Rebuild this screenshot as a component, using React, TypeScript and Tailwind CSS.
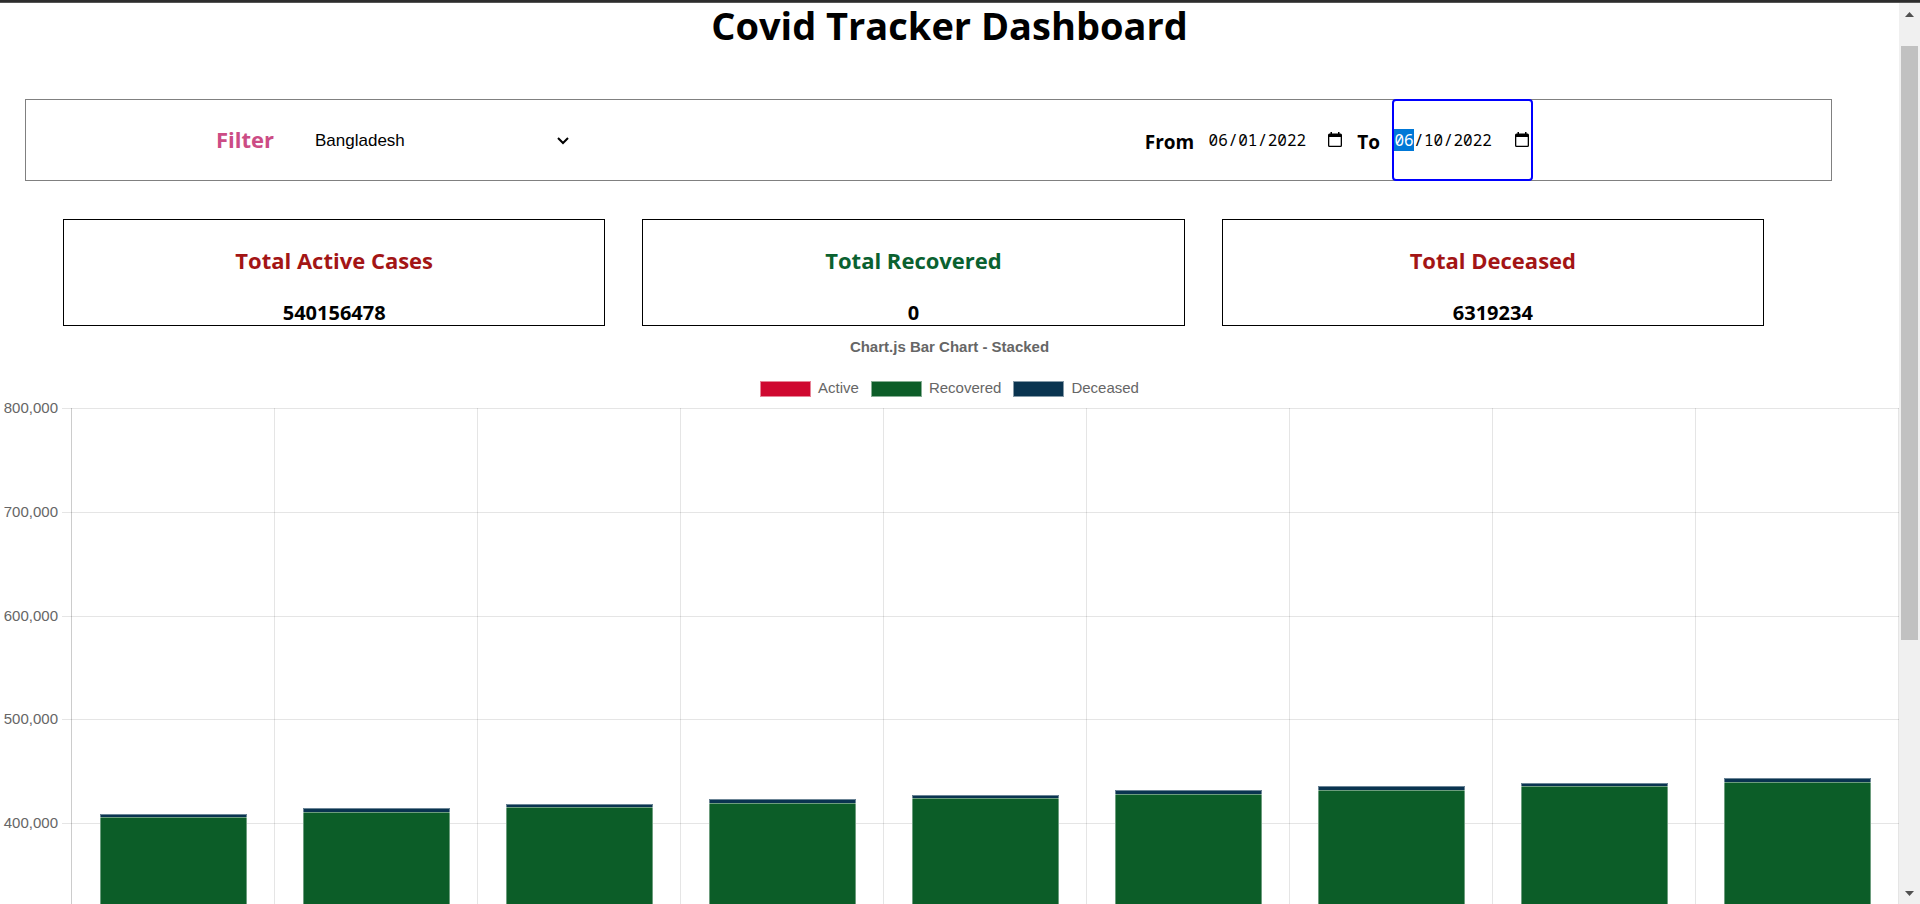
import React from "react";

const plot = { left: 71, top: 400 };
const ticks = [
  { label: "800,000", y: 408 },
  { label: "700,000", y: 512 },
  { label: "600,000", y: 616 },
  { label: "500,000", y: 719 },
  { label: "400,000", y: 823 },
];
const bars = [
  { top: 814, rec: 817 },
  { top: 808, rec: 812 },
  { top: 804, rec: 807 },
  { top: 799, rec: 803 },
  { top: 795, rec: 798 },
  { top: 790, rec: 794 },
  { top: 786, rec: 790 },
  { top: 783, rec: 786 },
  { top: 778, rec: 782 },
];
const col = 203;

function Chart() {
  return (
    <svg viewBox="0 0 1899 504" className="block w-full" role="img" aria-label="Stacked bar chart">
      {ticks.map((t) => (
        <g key={t.label}>
          <rect x={62} y={t.y - plot.top} width={1837} height={1} fill="#000" fillOpacity={0.1} />
          <text
            x={58}
            y={t.y - plot.top + 5}
            textAnchor="end"
            fill="#666"
            fontSize={15}
            fontFamily="Liberation Sans, Arial, sans-serif"
          >
            {t.label}
          </text>
        </g>
      ))}
      {Array.from({ length: 10 }, (_, i) => (
        <rect key={i} x={plot.left + i * col} y={8} width={1} height={496} fill="#000" fillOpacity={i === 0 ? 0.2 : 0.1} />
      ))}
      {bars.map((b, i) => {
        const x = 100 + i * col;
        return (
          <g key={i}>
            <rect x={x} y={b.top - plot.top} width={147} height={504} fill="#0a3450" />
            <rect x={x} y={b.rec - plot.top} width={147} height={504} fill="#0c5d28" />
            <path
              d={`M${x + 0.5} 504V${b.top - plot.top + 0.5}h146V504M${x} ${b.rec - plot.top + 0.5}h147`}
              fill="none"
              stroke="#fff"
              strokeOpacity={0.4}
            />
          </g>
        );
      })}
    </svg>
  );
}

function Card({ title, value, tone }: { title: string; value: string; tone: string }) {
  return (
    <section className="flex h-[107px] flex-1 flex-col items-center border border-black pt-6">
      <h2 className={`text-[22px] leading-8 font-bold ${tone}`}>{title}</h2>
      <p className="mt-6 text-[20px] leading-[26px] font-bold">{value}</p>
    </section>
  );
}

function Key({ label, fill }: { label: string; fill: string }) {
  return (
    <li className="flex items-center gap-[7px]">
      <span className={`h-4 w-[51px] border border-white/50 ${fill}`} />
      <span className="pb-0.5 leading-4">{label}</span>
    </li>
  );
}

function CalendarIcon() {
  return (
    <svg viewBox="0 0 16 16" className="size-4" aria-hidden="true">
      <path
        d="M2.500 1.500H3.500V0H5v1.500h6V0h1.500v1.500h1q1.500 0 1.500 1.500v10.500q0 1.500-1.500 1.500h-11Q1 15 1 13.500V3q0-1.500 1.500-1.500zM2.300 5v8.200q0 .5.5.5h10.400q.5 0 .5-.5V5z"
        fillRule="evenodd"
      />
    </svg>
  );
}

function DateField({
  id,
  month,
  day,
  year,
  active,
}: {
  id: string;
  month: string;
  day: string;
  year: string;
  active?: boolean;
}) {
  return (
    <div
      className={`flex w-[141px] items-center justify-between self-stretch ${
        active ? "-my-px rounded-[4px] border-2 border-[#0000ff] bg-white pr-px" : "pr-1 pl-0.5"
      }`}
    >
      <div className="flex items-center font-['Noto_Sans_Mono','DejaVu_Sans_Mono',monospace] text-base leading-[22px]">
        <input
          id={id}
          defaultValue={month}
          className={`h-[22px] w-5 text-center outline-none ${active ? "bg-[#0078d7] text-white" : ""}`}
        />
        <span>/</span>
        <input aria-label={`${id} day`} defaultValue={day} className="h-[22px] w-5 text-center outline-none" />
        <span>/</span>
        <input aria-label={`${id} year`} defaultValue={year} className="h-[22px] w-[39px] text-center outline-none" />
      </div>
      <button aria-label="Open calendar">
        <CalendarIcon />
      </button>
    </div>
  );
}

export default function App() {
  return (
    <div className="flex h-screen overflow-hidden bg-white font-['Open_Sans','Noto_Sans',sans-serif] text-black">
      <div className="flex h-full w-full flex-col">
        <div className="h-[3px] shrink-0 border-b border-[#555] bg-[#2d2d2d]" />
        <div className="flex min-h-0 flex-1">
          <main className="min-w-0 flex-1">
            <h1 className="text-center text-[38px] leading-[44px] font-bold">Covid Tracker Dashboard</h1>
            <div className="mt-[52px] mr-[67px] ml-[25px] flex h-[82px] border border-[#808080]">
              <div className="flex flex-1 items-center pl-[190px]">
                <label htmlFor="country" className="w-[99px] pb-0.5 text-[22px] font-bold text-[#cc4c85]">
                  Filter
                </label>
                <div className="grid w-[258px] items-center pt-0.5 font-['Liberation_Sans',Arial,sans-serif] text-[17px]">
                  <select id="country" className="col-start-1 row-start-1 appearance-none">
                    <option>Bangladesh</option>
                  </select>
                  <svg
                    viewBox="0 0 12 8"
                    className="pointer-events-none col-start-1 row-start-1 mr-1 h-2 w-3 justify-self-end"
                    aria-hidden="true"
                  >
                    <path d="M1 1l5 5 5-5" fill="none" stroke="#000" strokeWidth={2} />
                  </svg>
                </div>
              </div>
              <div className="mr-[298px] flex items-center">
                <label htmlFor="from" className="mr-3 pt-1 text-[19px] font-bold">
                  From
                </label>
                <DateField id="from" month="06" day="01" year="2022" />
                <label htmlFor="to" className="mr-3 ml-2.5 pt-1 text-[19px] font-bold">
                  To
                </label>
                <DateField id="to" month="06" day="10" year="2022" active />
              </div>
            </div>
            <div className="mt-[38px] mr-[135px] ml-[63px] flex gap-[37px]">
              <Card title="Total Active Cases" value="540156478" tone="text-[#a31515]" />
              <Card title="Total Recovered" value="0" tone="text-[#0a6130]" />
              <Card title="Total Deceased" value="6319234" tone="text-[#a31515]" />
            </div>
            <div className="font-['Liberation_Sans',Arial,sans-serif] text-[15px] text-[#666]">
              <h2 className="mt-[11px] text-center leading-5 font-bold">Chart.js Bar Chart - Stacked</h2>
              <ul className="mt-[21px] flex h-[22px] items-center justify-center gap-3">
                <Key label="Active" fill="bg-[#cf0830]" />
                <Key label="Recovered" fill="bg-[#0c5d28]" />
                <Key label="Deceased" fill="bg-[#0a3450]" />
              </ul>
              <Chart />
            </div>
          </main>
          <aside className="flex w-[21px] flex-col items-center bg-[#f0f0f0]" aria-hidden="true">
            <svg viewBox="0 0 9 5" className="mt-[9px] h-[5px] w-[9px]" fill="#505050">
              <path d="M0 5L4.500 0L9 5z" />
            </svg>
            <div className="mt-[29px] h-[594px] w-[17px] bg-[#c1c1c1]" />
            <svg viewBox="0 0 9 5" className="mt-auto mb-2 h-[5px] w-[9px]" fill="#505050">
              <path d="M0 0L4.500 5L9 0z" />
            </svg>
          </aside>
        </div>
      </div>
    </div>
  );
}
